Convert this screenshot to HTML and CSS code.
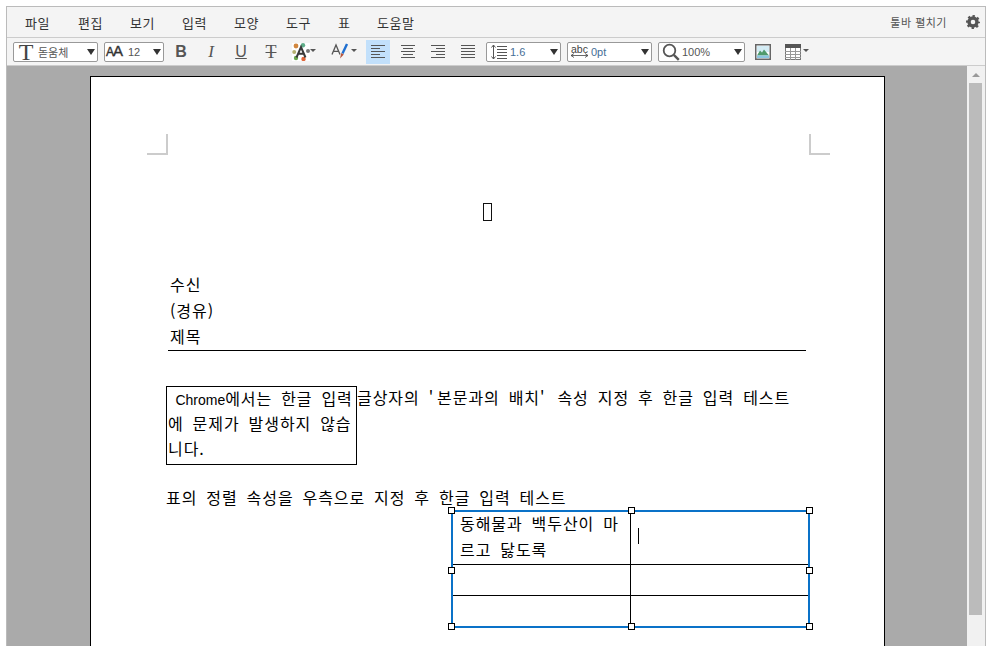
FILE: index.html
```html
<!DOCTYPE html>
<html lang="ko">
<head>
<meta charset="utf-8">
<title>문서</title>
<link rel="stylesheet" href="styles.css">
</head>
<body>
<div class="app">
  <nav class="menubar">
    <span class="menu">파일</span><span class="menu">편집</span><span class="menu">보기</span><span class="menu">입력</span><span class="menu">모양</span><span class="menu">도구</span><span class="menu menu-one">표</span><span class="menu">도움말</span>
    <span class="expand">툴바 펼치기</span>
    <svg class="gear" width="14" height="14" viewBox="0 0 14 14"><circle cx="7" cy="7" r="4" fill="none" stroke="#555" stroke-width="3.400"/><circle cx="7" cy="7" r="5.900" fill="none" stroke="#555" stroke-width="2.200" stroke-dasharray="2.320 2.314" stroke-dashoffset="1.160"/></svg>
  </nav>
  <div class="toolbar">
    <div class="sel sel-font"><span class="t-big">T</span><span class="sel-text kr">돋움체</span><i class="arrow"></i></div>
    <div class="sel sel-size"><span class="aa"><small>A</small>A</span><span class="sel-text blue">12</span><i class="arrow"></i></div>
    <span class="btn b-bold">B</span>
    <span class="btn b-italic">I</span>
    <span class="btn b-under">U</span>
    <span class="btn b-strike">T</span>
    <span class="color-btn">
      <svg width="18" height="18" viewBox="0 0 18 18"><rect width="18" height="18" fill="#fff"/><circle cx="4" cy="3" r="2.400" fill="#d2873f"/><circle cx="11" cy="2.200" r="2.200" fill="#5fae8a"/><circle cx="2.200" cy="9" r="2" fill="#b5b070"/><circle cx="16" cy="8" r="2" fill="#777"/><circle cx="4" cy="15" r="2.200" fill="#6aa84f"/><circle cx="11.500" cy="16" r="2.200" fill="#e0663a"/><path d="M4.500 14.500 9 4l4.500 10.500M6.300 10.800h5.400" fill="none" stroke="#3a3a3a" stroke-width="2"/></svg>
      <i class="mini"></i>
    </span>
    <span class="color-btn pen-btn">
      <svg width="20" height="18" viewBox="0 0 20 18"><path d="M1 11.500 5 2l4 9.500M2.500 8.300h5" fill="none" stroke="#555" stroke-width="1.300"/><path d="M16 1 11.500 10.500" stroke="#1f6fd0" stroke-width="2.400" fill="none"/><path d="M10.300 10 9 15.500 12.800 11.500Z" fill="#b5533c"/></svg>
      <i class="mini"></i>
    </span>
    <span class="align active"><svg width="14" height="13" viewBox="0 0 14 13"><path d="M0 .5h14M0 3.500h9M0 6.500h14M0 9.500h9M0 12.500h14" stroke="#555"/></svg></span>
    <span class="align"><svg width="14" height="13" viewBox="0 0 14 13"><path d="M0 .5h14M2 3.500h10M0 6.500h14M2 9.500h10M0 12.500h14" stroke="#555"/></svg></span>
    <span class="align"><svg width="14" height="13" viewBox="0 0 14 13"><path d="M0 .5h14M5 3.500h9M0 6.500h14M5 9.500h9M0 12.500h14" stroke="#555"/></svg></span>
    <span class="align"><svg width="14" height="13" viewBox="0 0 14 13"><path d="M0 .5h14M0 3.500h14M0 6.500h14M0 9.500h14M0 12.500h14" stroke="#555"/></svg></span>
    <div class="sel sel-line"><svg class="sel-icon" width="17" height="16" viewBox="0 0 17 16"><path d="M3.500 1v14M1.500 3.500l2-2.500 2 2.500M1.500 12.500l2 2.500 2-2.500M7 2.500h10M7 5.500h10M7 8.500h10M7 11.500h10M7 14.500h10" fill="none" stroke="#555"/></svg><span class="sel-text blue">1.6</span><i class="arrow"></i></div>
    <div class="sel sel-space"><span class="abc">abc<svg width="17" height="5" viewBox="0 0 17 5"><path d="M0 2.500h17M3 .5l-3 2 3 2M14 .5l3 2-3 2" fill="none" stroke="#444" stroke-width=".8"/></svg></span><span class="sel-text blue">0pt</span><i class="arrow"></i></div>
    <div class="sel sel-zoom"><svg class="sel-icon" width="18" height="18" viewBox="0 0 18 18"><circle cx="7.500" cy="7.500" r="5.800" fill="none" stroke="#555" stroke-width="1.800"/><path d="m11.800 11.800 5 5" stroke="#555" stroke-width="2.400"/></svg><span class="sel-text">100%</span><i class="arrow"></i></div>
    <svg class="pic" width="16" height="16" viewBox="0 0 16 16"><rect x=".75" y=".75" width="14.500" height="14.500" fill="#fff" stroke="#666" stroke-width="1.500"/><rect x="2" y="2" width="12" height="6" fill="#d4ecf5"/><path d="M2 11.500 5 6.500l2 2 2-3 5 6Z" fill="#4f9a6c"/><rect x="2" y="11.500" width="12" height="2.500" fill="#8cc6e0"/></svg>
    <span class="tbl-btn"><svg width="16" height="16" viewBox="0 0 16 16"><rect x=".5" y=".5" width="15" height="15" fill="#fff" stroke="#777"/><rect width="16" height="4" fill="#555"/><path d="M0 7.500h16M0 10.500h16M0 13.500h16M5.500 4v12M10.500 4v12" stroke="#999"/></svg><i class="mini"></i></span>
  </div>
  <div class="workspace">
    <div class="page">
      <i class="crop crop-l"></i><i class="crop crop-r"></i>
      <div class="title-row"><span class="tofu"></span></div>
      <div class="doc">
        <div class="head-block">
          <div class="head-line">수신</div>
          <div class="head-line">(경유)</div>
          <div class="head-line">제목</div>
        </div>
        <div class="flow-block">
          <div class="textbox"><div class="textbox-text"><span class="latin">&nbsp;Chrome</span>에서는 한글 입력 에 문제가 발생하지 않습니다.</div></div>
          <p class="wrap-text">글상자의 <span class="q">'</span>본문과의 배치<span class="q">'</span> 속성 지정 후 한글 입력 테스트</p>
        </div>
        <p class="table-title">표의 정렬 속성을 우측으로 지정 후 한글 입력 테스트</p>
        <div class="table-row">
          <div class="table-wrap">
            <table class="grid">
              <tr class="r1"><td class="c1"><div class="cell-text">동해물과 백두산이 마르고 닳도록</div></td><td class="c2"><i class="caret"></i></td></tr>
              <tr class="r2"><td></td><td></td></tr>
              <tr class="r3"><td></td><td></td></tr>
            </table>
            <i class="h h-tl"></i><i class="h h-tc"></i><i class="h h-tr"></i>
            <i class="h h-ml"></i><i class="h h-mr"></i>
            <i class="h h-bl"></i><i class="h h-bc"></i><i class="h h-br"></i>
          </div>
        </div>
      </div>
    </div>
    <div class="scrollbar"><i class="up"></i><div class="thumb"></div></div>
  </div>
</div>
</body>
</html>
```
FILE: styles.css
```css
* { box-sizing: border-box; }
html, body { margin: 0; height: 646px; overflow: hidden; background: #fff; }
body { font-family: "Noto Sans CJK KR", "Liberation Sans", sans-serif; padding: 6px 9px 0 6px; }
i { display: block; font-style: normal; }
.app { width: 980px; height: 640px; display: flex; flex-direction: column; border: 1px solid #bbb; border-bottom: 0; background: #f4f4f4; }

.menubar { height: 31px; flex: none; display: flex; align-items: center; padding-left: 18px; padding-right: 5px; border-bottom: 1px solid #ccc; font-size: 13px; color: #333; }
.menu { width: 52px; letter-spacing: .5px; line-height: 31px; }
.menu:first-child { width: 53px; }
.menu-one { width: 39px; }
.expand { margin-left: auto; font-size: 11px; color: #555; letter-spacing: .5px; }
.gear { margin-left: 19px; }

.toolbar { height: 27px; flex: none; display: flex; align-items: center; padding-left: 6px; position: relative; }
.sel { height: 20px; display: flex; align-items: center; border: 1px solid #999; border-radius: 2px; background: #fff; flex: none; position: relative; }
.sel-font { width: 85px; }
.sel-size { width: 60px; margin-left: 6px; }
.sel-line { width: 75px; }
.sel-space { width: 85px; margin-left: 6px; }
.sel-zoom { width: 87px; margin-left: 6px; }
.t-big { font: 24px/18px "Liberation Serif", serif; color: #444; width: 24px; text-align: center; }
.sel-text { font-size: 11px; color: #555; }
.blue { color: #456e96; }
.sel-size .sel-text { margin-left: 4px; font-size: 11px; color: #555; font-family: "Liberation Sans", sans-serif; }
.aa { font: 400 15px/18px "Liberation Sans", sans-serif; color: #333; width: 19px; padding-left: 1px; white-space: nowrap; -webkit-text-stroke: .4px #333; letter-spacing: -1px; }
.aa small { font-size: 12px; }
.sel-icon { margin-left: 3px; flex: none; }
.sel-line .sel-text { margin-left: 3px; font: 11px "Liberation Sans", sans-serif; }
.abc { width: 19px; margin-left: 2px; font: 10.500px/8px "Liberation Sans", sans-serif; color: #444; display: flex; flex-direction: column; align-items: center; }
.sel-space .sel-text { margin-left: 2px; font: 11px "Liberation Sans", sans-serif; }
.sel-zoom .sel-text { margin-left: 2px; font: 11px "Liberation Sans", sans-serif; color: #555; }
.arrow { position: absolute; right: 2px; top: 6px; width: 0; height: 0; border: 4px solid transparent; border-top: 6px solid #333; border-bottom: 0; }
.mini { flex: none; width: 0; height: 0; border: 3px solid transparent; border-top: 3px solid #555; border-bottom: 0; margin-top: -3px; }

.btn { flex: none; width: 30px; text-align: center; color: #555; font: 16px/20px "Liberation Sans", sans-serif; }
.b-bold { margin-left: 2px; font-weight: 700; }
.b-italic { font: italic 17px/20px "Liberation Serif", serif; }
.b-under { text-decoration: underline; }
.b-strike { text-decoration: line-through; font: 18px/20px "Liberation Serif", serif; }
.color-btn { flex: none; width: 24px; display: flex; align-items: center; justify-content: flex-end; gap: 0; margin-left: 6px; margin-right: 9px; }
.color-btn svg { flex: none; }
.pen-btn { margin-left: 8px; margin-right: 9px; }
.align { flex: none; width: 24px; height: 24px; margin-right: 6px; display: flex; align-items: center; justify-content: center; }
.align.active { background: #c2e0fb; }
.pic { margin-left: 10px; flex: none; }
.tbl-btn { margin-left: 14px; display: flex; align-items: center; gap: 2px; flex: none; }

.workspace { flex: 1; min-height: 0; background: #aaa; position: relative; display: flex; padding: 10px 0 0 83px; overflow: hidden; border-top: 1px solid #ccc; }
.page { width: 795px; height: 700px; flex: none; background: #fff; border: 1px solid #000; position: relative; }
.crop { position: absolute; top: 57px; width: 21px; height: 21px; border-bottom: 2px solid #ccc; }
.crop-l { left: 56px; border-right: 2px solid #ccc; }
.crop-r { left: 718px; border-left: 2px solid #ccc; }
.title-row { height: 194px; padding-top: 126px; display: flex; justify-content: center; }
.tofu { width: 9px; height: 18px; border: 1px solid #111; }

.doc { padding: 0 78px 0 75px; font-size: 16px; color: #000; letter-spacing: .95px; word-spacing: 3.500px; }
.head-block { width: 638px; margin-left: 2px; padding-left: 2px; border-bottom: 1px solid #000; height: 80px; margin-bottom: 35px; }
.head-line { line-height: 26px; height: 26px; }
.flow-block { display: flex; align-items: flex-start; height: 79px; width: 650px; line-height: 25px; }
.textbox { flex: none; width: 191px; height: 79px; border: 1px solid #000; padding: 0 1px; }
.textbox-text { margin-top: -1px; }
.latin { letter-spacing: 0; font-family: "Liberation Sans", sans-serif; font-size: 14px; line-height: 1; }
.q { letter-spacing: 4px; }
.wrap-text { margin: -1px 0 0; white-space: nowrap; }
.table-title { margin: 19px 0 0; height: 26px; line-height: 26px; white-space: nowrap; }

.table-row { display: flex; justify-content: flex-end; margin-right: -4px; }
.table-wrap { width: 359px; height: 118px; flex: none; position: relative; border: 2px solid #0a72c8; }
.grid { width: 355px; height: 114px; border-collapse: collapse; table-layout: fixed; }
.grid td { padding: 0; border: 1px solid #000; vertical-align: top; }
.grid tr:first-child td { border-top: 0; }
.grid tr:last-child td { border-bottom: 0; }
.grid td:first-child { border-left: 0; width: 177px; }
.grid td:last-child { border-right: 0; }
.r1 { height: 52px; } .r2 { height: 31px; } .r3 { height: 31px; }
.c1 { padding: 0 6px 0 7px !important; line-height: 26px; }
.cell-text { margin-top: -2px; }
.caret { width: 1px; height: 16px; background: #000; margin: 16px 0 0 7px; }
.h { position: absolute; width: 7px; height: 7px; background: #fff; border: 1px solid #000; }
.h-tl { left: -5px; top: -5px; } .h-tc { left: 175px; top: -5px; } .h-tr { right: -5px; top: -5px; }
.h-ml { left: -5px; top: 55px; } .h-mr { right: -5px; top: 55px; }
.h-bl { left: -5px; bottom: -4px; } .h-bc { left: 175px; bottom: -4px; } .h-br { right: -5px; bottom: -4px; }

.scrollbar { position: absolute; right: 0; top: 0; bottom: 0; width: 18px; background: #f1f1f1; }
.up { position: absolute; left: 5px; top: 7px; width: 0; height: 0; border: 4px solid transparent; border-bottom: 4px solid #999; border-top: 0; }
.thumb { position: absolute; left: 2px; top: 17px; width: 13px; height: 532px; background: #bbb; }
```
